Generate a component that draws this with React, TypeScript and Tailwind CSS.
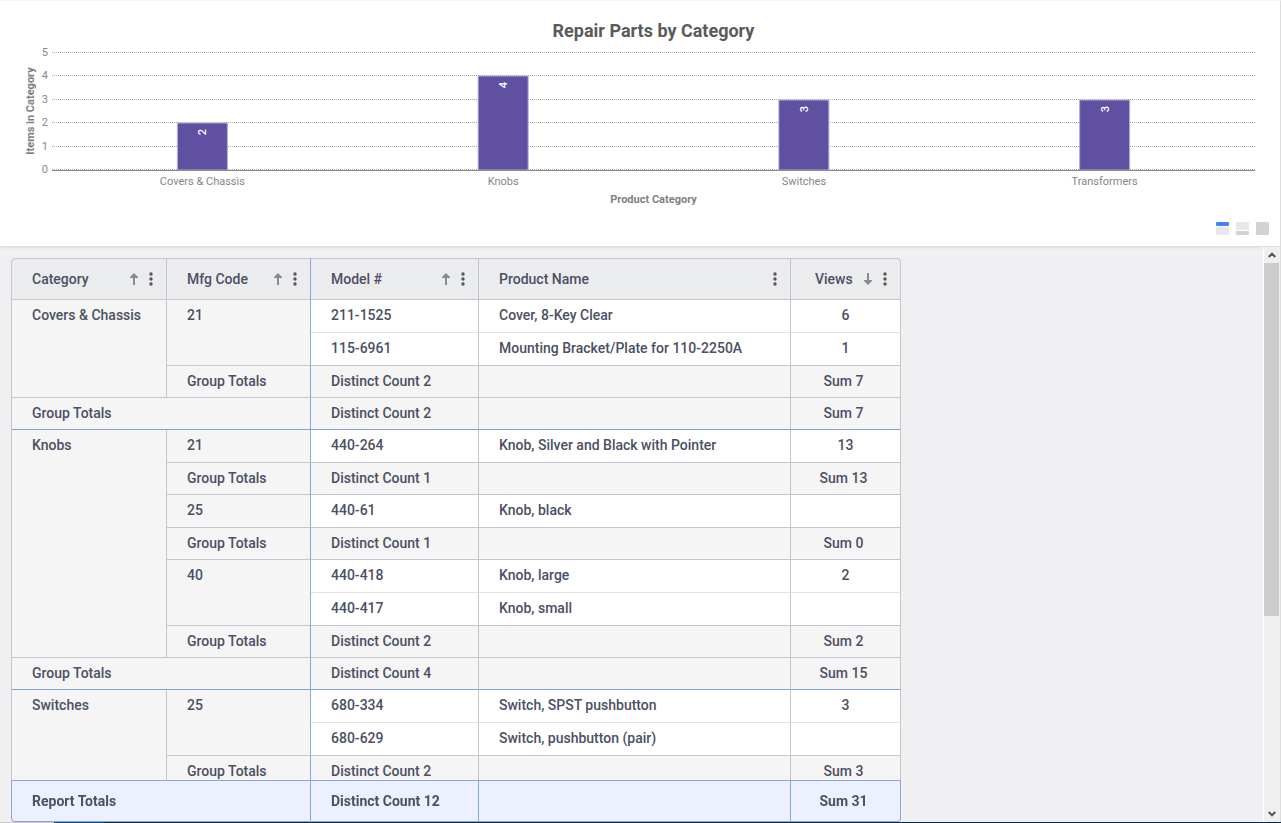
import React from 'react';

type Sort = 'up' | 'down' | null;

const columns: { label: string; sort: Sort; width: string }[] = [
    { label: 'Category', sort: 'up', width: 'w-[156px]' },
    { label: 'Mfg Code', sort: 'up', width: 'w-36' },
    { label: 'Model #', sort: 'up', width: 'w-42' },
    { label: 'Product Name', sort: null, width: 'w-78' },
    { label: 'Views', sort: 'down', width: 'w-[110px]' },
];

const categories = [
    {
        name: 'Covers & Chassis', distinct: 2, sum: 7,
        codes: [
            {
                code: '21', distinct: 2, sum: 7,
                items: [
                    { model: '211-1525', product: 'Cover, 8-Key Clear', views: '6' },
                    { model: '115-6961', product: 'Mounting Bracket/Plate for 110-2250A', views: '1' },
                ],
            },
        ],
    },
    {
        name: 'Knobs', distinct: 4, sum: 15,
        codes: [
            { code: '21', distinct: 1, sum: 13, items: [{ model: '440-264', product: 'Knob, Silver and Black with Pointer', views: '13' }] },
            { code: '25', distinct: 1, sum: 0, items: [{ model: '440-61', product: 'Knob, black', views: '' }] },
            {
                code: '40', distinct: 2, sum: 2,
                items: [
                    { model: '440-418', product: 'Knob, large', views: '2' },
                    { model: '440-417', product: 'Knob, small', views: '' },
                ],
            },
        ],
    },
    {
        name: 'Switches', distinct: 0, sum: 0,
        codes: [
            {
                code: '25', distinct: 2, sum: 3,
                items: [
                    { model: '680-334', product: 'Switch, SPST pushbutton', views: '3' },
                    { model: '680-629', product: 'Switch, pushbutton (pair)', views: '' },
                ],
            },
        ],
    },
];

const bars = [
    { label: 'Covers & Chassis', value: 2 },
    { label: 'Knobs', value: 4 },
    { label: 'Switches', value: 3 },
    { label: 'Transformers', value: 3 },
];

// y position of each tick, indexed by value
const tickY = [169, 146, 122, 99, 75, 52];

const Chart = () => (
    <div className="flex h-[210px] pr-[25px]">
        <svg className="w-13 h-full shrink-0 overflow-visible">
            <text transform="translate(34 111) rotate(-90)" textAnchor="middle" className="fill-[#808080] text-[11px] font-bold">Items in Category</text>
            {tickY.map((y, value) => (
                <text key={value} x="48" y={y + 4} textAnchor="end" className="fill-[#868686] text-[11px]">{value}</text>
            ))}
        </svg>
        <svg className="min-w-0 flex-1 h-full overflow-visible">
            <text x="50%" y="37" textAnchor="middle" className="fill-[#5a5a5a] text-lg font-bold">Repair Parts by Category</text>
            {tickY.map((y) => (
                <line key={y} x1="0" x2="100%" y1={y + 0.5} y2={y + 0.5} stroke="#a8a8a8" strokeDasharray="1 1" shapeRendering="crispEdges" />
            ))}
            {bars.map((bar, i) => (
                <svg key={bar.label} x={`${12.5 + i * 25}%`} className="overflow-visible">
                    <rect x="-25" y={tickY[bar.value] + 1} width="50" height={169 - tickY[bar.value]} fill="#5f50a1" stroke="#b5acd6" />
                    <text transform={`translate(4 ${tickY[bar.value] + 10}) rotate(-90)`} textAnchor="middle" className="fill-white text-[11px] font-medium">{bar.value}</text>
                    <text y="185" textAnchor="middle" className="fill-[#868686] text-[11px]">{bar.label}</text>
                </svg>
            ))}
            <line x1="0" x2="100%" y1="170.5" y2="170.5" stroke="#8c8c8c" shapeRendering="crispEdges" />
            <text x="50%" y="203" textAnchor="middle" className="fill-[#808080] text-[11px] font-bold">Product Category</text>
        </svg>
    </div>
);

const LayoutButtons = () => (
    <div className="flex justify-end gap-[7px] pr-[11px] pt-3">
        <button aria-label="Chart on top" className="flex h-[13px] w-[13px] flex-col gap-px">
            <span className="h-1 w-full rounded-[1px] bg-[#4a80f5]" />
            <span className="w-full flex-1 rounded-[1px] bg-[#e8e8e8]" />
        </button>
        <button aria-label="Chart on bottom" className="flex h-[13px] w-[13px] flex-col gap-px">
            <span className="w-full flex-1 rounded-[1px] bg-[#e8e8e8]" />
            <span className="h-1 w-full rounded-[1px] bg-[#d2d2d2]" />
        </button>
        <button aria-label="Table only" className="h-[13px] w-[13px] rounded-[1px] bg-[#d2d2d2]" />
    </div>
);

const SortArrow = ({ dir }: { dir: 'up' | 'down' }) => (
    <svg viewBox="0 0 8 12" className={`h-3 w-2 ${dir === 'down' ? 'rotate-180' : ''}`} fill="#878a96">
        <path d="M4 0 L8 4 V5 H5 V12 H3 V5 H0 V4 Z" />
    </svg>
);

const HeaderCell = ({ label, sort, index }: { label: string; sort: Sort; index: number }) => (
    <th className={`h-[42px] border-y border-r border-[#c4c6cc] bg-[#ebecee] p-0 font-medium ${index === 0 ? 'rounded-tl border-l' : ''} ${index === 1 ? 'border-r-[#88a5de]' : ''} ${index === 4 ? 'rounded-tr' : ''}`}>
        <div className={`flex items-center pr-[13px] ${index === 4 ? 'pl-6' : 'pl-5'}`}>
            <span className="flex-1 text-left">{label}</span>
            {sort && <SortArrow dir={sort} />}
            <button aria-label={`${label} options`} className="ml-[11px]">
                <svg viewBox="0 0 4 14" className="h-3.5 w-1" fill="#585858">
                    <circle cx="2" cy="2" r="1.7" />
                    <circle cx="2" cy="7" r="1.7" />
                    <circle cx="2" cy="12" r="1.7" />
                </svg>
            </button>
        </div>
    </th>
);

const total = 'h-8 border-b border-r border-[#c4c6cc] bg-[#f5f5f5] pl-5 pt-0 pb-0.5';
const group = 'border-b border-r border-[#c4c6cc] bg-[#f5f5f5] px-5 py-[5px] align-top text-left font-medium';

const CategoryRows = ({ category, last }: { category: (typeof categories)[number]; last: boolean }) => {
    const rowCount = category.codes.reduce((n, c) => n + c.items.length + 1, 0);

    return (
        <tbody>
            {category.codes.map((code, ci) => (
                <React.Fragment key={code.code}>
                    {code.items.map((item, i) => {
                        const line = i === code.items.length - 1 ? 'border-b-[#c4c6cc]' : 'border-b-[#e2e3e6]';
                        const cell = `h-[33px] border-b border-r border-r-[#c4c6cc] bg-white px-5 pt-0 pb-0.5 ${line}`;
                        return (
                            <tr key={item.model}>
                                {ci === 0 && i === 0 && <th rowSpan={rowCount} className={`${group} border-l`}>{category.name}</th>}
                                {i === 0 && <th rowSpan={code.items.length} className={`${group} border-r-[#88a5de]`}>{code.code}</th>}
                                <td className={cell}>{item.model}</td>
                                <td className={cell}>{item.product}</td>
                                <td className={`${cell} text-center`}>{item.views}</td>
                            </tr>
                        );
                    })}
                    <tr>
                        <td className={`${total} border-r-[#88a5de]`}>Group Totals</td>
                        <td className={total}>Distinct Count {code.distinct}</td>
                        <td className={total} />
                        <td className={`${total} pr-6 text-center`}>Sum {code.sum}</td>
                    </tr>
                </React.Fragment>
            ))}
            {!last && (
                <tr>
                    <td colSpan={2} className={`${total} border-l border-r-[#88a5de] border-b-[#88a0d8]`}>Group Totals</td>
                    <td className={`${total} border-b-[#88a0d8]`}>Distinct Count {category.distinct}</td>
                    <td className={`${total} border-b-[#88a0d8]`} />
                    <td className={`${total} border-b-[#88a0d8] pr-6 text-center`}>Sum {category.sum}</td>
                </tr>
            )}
        </tbody>
    );
};

const grand = 'h-[42px] border-y border-r border-[#88a5de] bg-[#edf1fd] py-0 pl-5 font-bold';

const ReportTable = () => (
    <table className="w-[890px] table-fixed border-separate border-spacing-0 text-sm font-medium leading-5 text-[#4b5064]">
        <colgroup>
            {columns.map((c) => <col key={c.label} className={c.width} />)}
        </colgroup>
        <thead>
            <tr>
                {columns.map((c, i) => <HeaderCell key={c.label} label={c.label} sort={c.sort} index={i} />)}
            </tr>
        </thead>
        {categories.map((c, i) => <CategoryRows key={c.name} category={c} last={i === categories.length - 1} />)}
        <tfoot className="sticky bottom-0">
            <tr>
                <td colSpan={2} className={`${grand} rounded-bl border-l`}>Report Totals</td>
                <td className={grand}>Distinct Count 12</td>
                <td className={grand} />
                <td className={`${grand} rounded-br pr-6 text-center`}>Sum 31</td>
            </tr>
        </tfoot>
    </table>
);

const ScrollBar = () => (
    <div className="flex w-[17px] shrink-0 flex-col border-l border-white bg-[#efefef] pr-px">
        <button aria-label="Scroll up" className="flex h-4 items-center justify-center">
            <svg viewBox="0 0 8 6" className="h-1.5 w-2" fill="none" stroke="#585858" strokeWidth="2.2"><path d="M0.7 5 L4 1.7 L7.3 5" /></svg>
        </button>
        <div className="min-h-0 flex-1">
            <div className="h-[65%] bg-[#cdcdcd]" />
        </div>
        <button aria-label="Scroll down" className="flex h-4 items-center justify-center">
            <svg viewBox="0 0 8 6" className="h-1.5 w-2" fill="none" stroke="#585858" strokeWidth="2.2"><path d="M0.7 1 L4 4.3 L7.3 1" /></svg>
        </button>
    </div>
);

export default function App() {
    return (
        <div className="flex h-screen flex-col bg-[#f0f0f3] font-['Roboto',sans-serif]">
            {/* CHART */}
            <section className="h-[246px] shrink-0 border-r border-t border-r-[#dcdcdc] border-t-[#f5f5f5] bg-white shadow-[0_1px_3px_rgba(0,0,0,0.12)]">
                <div className="-mt-px">
                    <Chart />
                    <LayoutButtons />
                </div>
            </section>

            {/* REPORT */}
            <section className="flex min-h-0 flex-1 border-r border-[#dcdcdc] pt-px">
                <div className="min-w-0 flex-1 overflow-hidden pl-[11px] pt-[11px]">
                    <ReportTable />
                </div>
                <ScrollBar />
            </section>

            {/* BOTTOM EDGE */}
            <div className="flex h-px shrink-0 bg-[#0b2a42]">
                <div className="w-[54px] bg-[#c8c8c8]" />
                <div className="w-[50px] bg-[#0a4a80]" />
            </div>
        </div>
    );
}
